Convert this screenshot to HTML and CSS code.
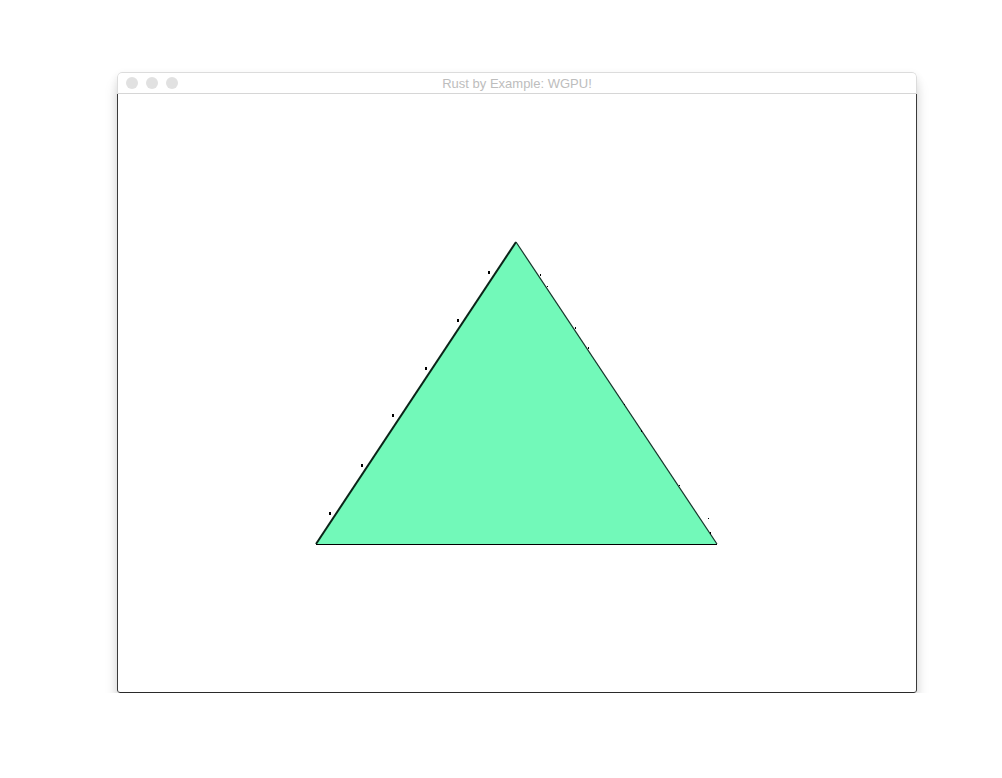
FILE: index.html
```html
<!DOCTYPE html>
<html>
<head>
<meta charset="utf-8">
<link rel="stylesheet" href="styles.css">
</head>
<body>
<div class="stage">
  <div class="window">
    <div class="titlebar">
      <div class="lights">
        <span class="light"></span><span class="light"></span><span class="light"></span>
      </div>
      <div class="title">Rust by Example: WGPU!</div>
    </div>
    <div class="content">
      <svg class="canvas" width="798" height="598" viewBox="0 0 798 598">
        <polygon points="398,148 198,450 599,450" fill="#72f9b9"/>
        <polyline points="198,450 398,148" fill="none" stroke="#0a2418" stroke-width="2"/>
        <polyline points="398,148 599,450" fill="none" stroke="#16352a" stroke-width="1.2"/>
        <line x1="198" y1="450.5" x2="599" y2="450.5" stroke="#000" stroke-width="1"/>
        <g fill="#000">
          <rect x="211" y="418" width="2" height="3"/>
          <rect x="243" y="370" width="2" height="3"/>
          <rect x="274" y="320" width="2" height="3"/>
          <rect x="307" y="273" width="2" height="3"/>
          <rect x="339" y="225" width="2" height="3"/>
          <rect x="370" y="177" width="2" height="3"/>
          <rect x="422" y="180" width="1" height="2"/>
          <rect x="429" y="192" width="1" height="1"/>
          <rect x="457" y="233" width="1" height="2"/>
          <rect x="470" y="253" width="1" height="2"/>
          <rect x="506" y="310" width="1" height="1"/>
          <rect x="523" y="336" width="1" height="2"/>
          <rect x="561" y="391" width="1" height="1"/>
          <rect x="592" y="438" width="1" height="2"/>
          <rect x="590" y="424" width="1" height="1"/>
        </g>
      </svg>
    </div>
  </div>
</div>
</body>
</html>
```
FILE: styles.css
```css
html, body {
  margin: 0;
  padding: 0;
  background: #ffffff;
}
.stage {
  padding: 72px 0 0 117px;
}
.window {
  width: 800px;
  height: 621px;
  box-sizing: border-box;
  display: flex;
  flex-direction: column;
  border-radius: 5px 5px 3px 3px;
  background: #ffffff;
  box-shadow: 0 12px 14px rgba(0,0,0,0.13), 0 3px 8px rgba(0,0,0,0.09);
  overflow: hidden;
}
.titlebar {
  position: relative;
  height: 22px;
  box-sizing: border-box;
  border: 1px solid #dcdcdc;
  border-bottom: 1px solid #d6d6d6;
  border-radius: 5px 5px 0 0;
  display: flex;
  align-items: center;
  justify-content: center;
  background: #ffffff;
}
.lights {
  position: absolute;
  left: 8px;
  top: 4px;
  display: flex;
  gap: 8px;
}
.light {
  width: 12px;
  height: 12px;
  border-radius: 50%;
  background: #e1e1e1;
}
.title {
  font-family: "Liberation Sans", Arial, sans-serif;
  font-size: 13px;
  color: #bdbdbd;
  margin-top: 1px;
}
.content {
  flex: 1;
  border-left: 1px solid #3a3a3a;
  border-right: 1px solid #3a3a3a;
  border-bottom: 1px solid #2a2a2a;
  border-radius: 0 0 3px 3px;
  background: #ffffff;
  overflow: hidden;
}
.canvas {
  display: block;
}
```
